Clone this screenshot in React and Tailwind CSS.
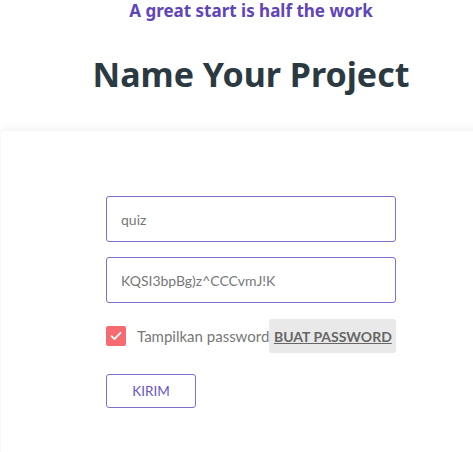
import React, { useState } from "react";

export default function App() {
  const [name, setName] = useState("quiz");
  const [password, setPassword] = useState("KQSI3bpBg)z^CCCvmJ!K");
  const [show, setShow] = useState(true);

  return (
    <div className="w-full h-[452px] overflow-hidden bg-white" style={{ fontFamily: '"Noto Sans", "Open Sans", sans-serif' }}>
      <div className="w-[502px]">
        {/* Header */}
        <p className="text-center text-[17px] leading-[22px] font-bold text-[#5f45b8]">
          A great start is half the work
        </p>
        <h1 className="text-center text-[34px] leading-[44px] font-bold text-[#2b3a42] mt-[30px]">
          Name Your Project
        </h1>

        {/* Card */}
        <div className="ml-[1px] mt-[35px] h-[400px] bg-white rounded-tl-[3px] shadow-[0_-2px_8px_rgba(0,0,0,0.06)] pt-[65px] pl-[105px] font-['Lato',sans-serif]">
          <div className="w-[290px] flex flex-col">
            <input
              value={name}
              onChange={(e) => setName(e.target.value)}
              className="h-[46px] px-[14px] border border-[#7d6fd1] rounded-[3px] text-[14px] text-[#777] outline-none"
            />
            <input
              type={show ? "text" : "password"}
              value={password}
              onChange={(e) => setPassword(e.target.value)}
              className="mt-[15px] h-[46px] px-[14px] border border-[#7d6fd1] rounded-[3px] text-[14px] text-[#777] outline-none"
            />

            <div className="mt-[16px] flex items-center h-[34px]">
              <button
                onClick={() => setShow(!show)}
                className="w-[20px] h-[20px] shrink-0 rounded-[2px] bg-[#f56b6f] flex items-center justify-center"
              >
                {show && (
                  <svg width="12" height="10" viewBox="0 0 12 10" fill="none">
                    <path d="M1.5 5.2L4.5 8L10.5 1.8" stroke="white" strokeWidth="1.8" strokeLinecap="round" strokeLinejoin="round" />
                  </svg>
                )}
              </button>
              <span className="ml-[11px] text-[15px] text-[#777] whitespace-nowrap">Tampilkan password</span>
              <button className="ml-auto h-[34px] w-[127px] shrink-0 bg-[#e9e9e9] rounded-[3px] text-[14px] font-bold text-[#666] underline whitespace-nowrap">
                BUAT PASSWORD
              </button>
            </div>

            <button className="mt-[21px] w-[90px] h-[34px] border border-[#7d6fd1] rounded-[3px] text-[13.5px] text-[#6a56c4]">
              KIRIM
            </button>
          </div>
        </div>
      </div>
    </div>
  );
}
